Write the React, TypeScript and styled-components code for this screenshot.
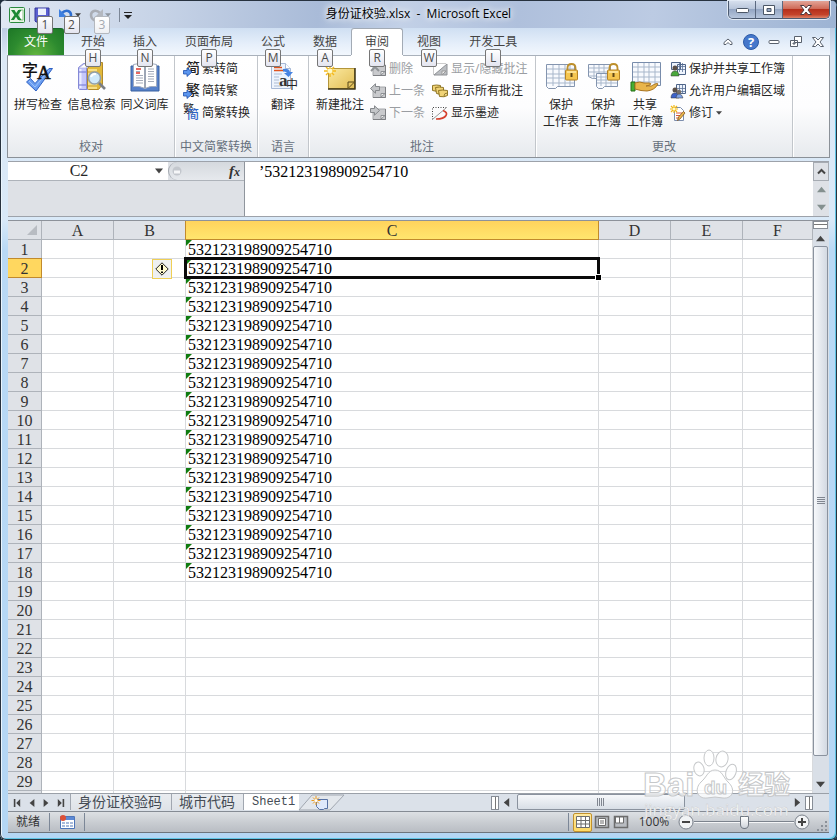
import React from "react";
import styled, { createGlobalStyle, css } from "styled-components";

const ui = `"Open Sans", "Noto Sans CJK SC", sans-serif`;
const song = `"Liberation Serif", "Noto Sans CJK SC", serif`;

const GlobalStyle = createGlobalStyle`
  * { box-sizing: border-box; }
  body { margin: 0; background: #1f2c3b; }
  button, input, textarea { font: inherit; color: inherit; margin: 0; padding: 0; border: 0; background: none; }
  svg { display: block; flex: none; overflow: visible; }
`;

const Frame = styled.div`
  position: relative;
  display: flex;
  flex-direction: column;
  height: 100vh;
  min-height: 480px;
  overflow: hidden;
  padding: 0 8px 7px 8px;
  border-radius: 7px 7px 6px 6px;
  font: 12px/16px ${ui};
  color: #262626;
  background: linear-gradient(#a9bddb 0, #bccbe2 26px, #dce8f5 56px, #d9e9f8 220px, #b9d9f5 250px, #b4d6f4 100%);
  box-shadow: inset 0 0 0 1px #27323f, inset 2px 0 0 #eaf5fd, inset -2px -2px 0 #5ec4e4;
`;

const TitleBar = styled.header`
  position: relative;
  display: flex;
  flex: none;
  height: 27px;
  justify-content: space-between;
  align-items: flex-start;
  margin: 1px -7px 0 -7px;
  padding: 0 6px 0 8px;
  background: linear-gradient(95deg, #dfe7f2 0, #c5d2e6 20%, #a9bbd8 38%, #c3d1e7 48%, #afc0dc 62%, #bccbe3 78%, #9db3d3 100%);
`;

const Title = styled.h1`
  position: absolute;
  inset: 4px 0 auto 0;
  margin: 0;
  text-align: center;
  pointer-events: none;
  white-space: pre;
  font: 12px/17px ${ui};
  color: #000;
  text-shadow: 0 0 6px #fff, 0 0 8px #fff;
`;

const QuickBar = styled.div`
  display: flex;
  align-items: center;
  height: 28px;
`;

const QuickButton = styled.button<{ $w: number }>`
  position: relative;
  display: flex;
  align-items: center;
  gap: 2px;
  width: ${(p) => p.$w}px;
  height: 16px;
`;

const Divider = styled.span<{ $gap?: number; $h?: number }>`
  width: 1px;
  height: ${(p) => p.$h ?? 14}px;
  margin: 0 ${(p) => p.$gap ?? 6}px;
  background: #7c8797;
`;

const KeyTip = styled.span<{ $dim?: boolean; $low?: boolean }>`
  position: absolute;
  z-index: 3;
  top: ${(p) => (p.$low ? 20 : 9)}px;
  left: 50%;
  transform: translateX(-50%);
  width: 16px;
  height: 18px;
  border: 1px solid ${(p) => (p.$dim ? "#b4b8be" : "#767676")};
  border-radius: 2px;
  background: linear-gradient(#fff, ${(p) => (p.$dim ? "#eef0f4" : "#e4e5f0")});
  color: ${(p) => (p.$dim ? "#a5a9b0" : "#4c4c4c")};
  font: 12px/16px ${ui};
  text-align: center;
`;

const WindowButtons = styled.div`
  display: flex;
  height: 18px;
  border: 1px solid #4c5a70;
  border-top: 0;
  border-radius: 0 0 5px 5px;
  overflow: hidden;
  box-shadow: 0 0 0 1px #e2eaf5;
`;

const WindowButton = styled.button<{ $close?: boolean }>`
  display: grid;
  place-items: center;
  width: ${(p) => (p.$close ? 46 : 27)}px;
  border-right: ${(p) => (p.$close ? "0" : "1px solid #5b6980")};
  background: ${(p) =>
    p.$close
      ? "linear-gradient(#e2a497 0, #cf6a58 45%, #b5301c 50%, #c4432a 80%, #dd8268 100%)"
      : "linear-gradient(#d6dfed 0, #b9c6db 45%, #95a7c4 50%, #b7c6dd 100%)"};
`;

const TabRow = styled.nav`
  display: flex;
  flex: none;
  height: 27px;
  margin: 0 -1px;
  padding: 0 1px;
  background: linear-gradient(#cfdff2, #e6effa 60%, #f2f7fd);
`;

const Tab = styled.button<{ $kind?: "file" | "active" }>`
  position: relative;
  flex: none;
  padding: 0 14px;
  height: 27px;
  font: 12px/26px ${ui};
  color: #444;
  border: 1px solid transparent;
  border-width: 1px 0 0;
  ${(p) =>
    p.$kind === "file" &&
    css`
      padding: 0 16px;
      margin-right: 3px;
      color: #fff;
      border-color: #17662a;
      border-radius: 3px 3px 0 0;
      background: radial-gradient(ellipse at 50% 110%, #66b83f 0, #2d8b2f 60%, #1d7726 100%);
    `}
  ${(p) =>
    p.$kind === "active" &&
    css`
      padding: 0 13px;
      border-width: 1px 1px 0;
      border-color: #a3abb5;
      border-radius: 3px 3px 0 0;
      background: #fff;
      box-shadow: 0 1px 0 #fff;
      z-index: 1;
    `}
`;

const TabTools = styled.div`
  display: flex;
  align-items: center;
  gap: 8px;
  margin-left: auto;
  padding-right: 4px;
  button { display: block; }
`;

const Ribbon = styled.section`
  display: flex;
  flex: none;
  height: 103px;
  margin: 0 -1px;
  border: 1px solid #8b9198;
  border-top-color: #a9b1bb;
  background: linear-gradient(#fff 0, #fdfdfe 50%, #e7eaee 100%);
`;

const Group = styled.section<{ $w: number }>`
  display: flex;
  flex: none;
  flex-direction: column;
  width: ${(p) => p.$w}px;
  border-right: 1px solid #c2c6cb;
  box-shadow: 1px 0 0 #fff;
`;

const GroupBody = styled.div<{ $pad?: number }>`
  display: flex;
  flex: 1;
  padding: 2px 0 0 ${(p) => p.$pad ?? 3}px;
`;

const GroupName = styled.h2`
  margin: 0 0 1px;
  text-align: center;
  white-space: nowrap;
  font: 12px/18px ${ui};
  color: #66707c;
`;

const BigButton = styled.button<{ $w: number }>`
  display: flex;
  flex-direction: column;
  align-items: center;
  width: ${(p) => p.$w}px;
  height: 74px;
  line-height: 17px;
  white-space: nowrap;
  svg { margin: 2px 0 4px; }
`;

const Stack = styled.div<{ $ml?: number }>`
  display: flex;
  flex-direction: column;
  margin-left: ${(p) => p.$ml ?? 0}px;
`;

const SmallButton = styled.button`
  display: flex;
  align-items: center;
  gap: 3px;
  height: 22px;
  white-space: nowrap;
  &:disabled { color: #9a9da2; }
`;

const FormulaBar = styled.section`
  display: flex;
  flex: none;
  height: 56px;
  margin-top: 3px;
  border: 1px solid #9da2aa;
  border-width: 1px 0;
  background: #dee1e6;
`;

const NameArea = styled.div`
  flex: none;
  width: 237px;
  border-right: 1px solid #8f959d;
`;

const NameRow = styled.div`
  display: flex;
  align-items: center;
  height: 19px;
  border-bottom: 1px solid #aeb3ba;
`;

const NameInput = styled.input`
  width: 142px;
  height: 18px;
  background: #fff !important;
  text-align: center;
  font: 16px/18px ${song} !important;
`;

const NameArrow = styled.button`
  display: grid;
  place-items: center;
  width: 18px;
  height: 18px;
  background: #fff !important;
`;

const FxZone = styled.div`
  display: flex;
  flex: 1;
  align-items: center;
  justify-content: space-between;
  height: 18px;
  padding: 0 4px 0 3px;
  border-left: 1px solid #a4a9b0;
  border-radius: 9px 0 0 9px;
  background: linear-gradient(#d5d9de, #e6e9ed);
`;

const FxButton = styled.button`
  font: italic bold 15px/16px "Liberation Serif", serif !important;
  color: #333;
  span { font-size: 12px; }
`;

const FormulaInput = styled.textarea`
  flex: 1;
  min-width: 0;
  padding: 1px 14px !important;
  resize: none;
  outline: none;
  background: #fff !important;
  font: 16px/18px ${song} !important;
  color: #000;
`;

const FormulaScroll = styled.div`
  display: flex;
  flex-direction: column;
  width: 16px;
  button { display: grid; place-items: center; flex: 1; }
  button:first-child { border: 1px solid #a6abb2; }
`;

const GridArea = styled.main`
  display: flex;
  flex: 1;
  min-height: 0;
  margin-top: 3px;
  border-top: 1px solid #8d929a;
  background: #fff;
`;

const SheetView = styled.div`
  flex: 1;
  min-width: 0;
  overflow: hidden;
`;

const Sheet = styled.table`
  width: 100%;
  min-width: 800px;
  table-layout: fixed;
  border-collapse: separate;
  border-spacing: 0;
  font: 16px/16px ${song};
  color: #000;
`;

const Col = styled.col<{ $w?: number }>`
  width: ${(p) => (p.$w ? p.$w + "px" : "auto")};
`;

const Head = styled.th<{ $on?: boolean; $row?: boolean }>`
  height: 19px;
  padding: 2px 0 0;
  border: 1px solid #aeb3ba;
  border-width: 0 1px 1px 0;
  font-weight: 400;
  color: #333;
  background: #dfe2e7;
  ${(p) =>
    p.$on &&
    css`
      background: ${p.$row ? "#ffd75f" : "linear-gradient(#ffd35c, #ffe66e)"};
      border-color: #c18a2c;
      box-shadow: ${p.$row ? "0 -1px 0 #c18a2c" : "-1px 0 0 #c18a2c"};
    `}
`;

const Corner = styled.th`
  padding: 0 4px 0 0;
  border: 1px solid #aeb3ba;
  border-width: 0 1px 1px 0;
  background: #dfe2e7;
  svg { margin-left: auto; }
`;

const Cell = styled.td<{ $text?: boolean; $sel?: boolean }>`
  position: relative;
  height: 19px;
  padding: 2px 0 0 2px;
  border: 1px solid #d8dadd;
  border-width: 0 1px 1px 0;
  ${(p) =>
    p.$text &&
    css`
      &::before {
        content: "";
        position: absolute;
        top: 0;
        left: 0;
        border: 3px solid #107c10;
        border-right-color: transparent;
        border-bottom-color: transparent;
      }
    `}
  ${(p) =>
    p.$sel &&
    css`
      &::after {
        content: "";
        position: absolute;
        z-index: 1;
        inset: -2px -2px -2px -2px;
        border: 3px solid #0b0b0b;
      }
    `}
`;

const FillHandle = styled.span`
  position: absolute;
  z-index: 2;
  right: -4px;
  bottom: -4px;
  width: 7px;
  height: 7px;
  border: 1px solid #fff;
  background: #000;
`;

const ErrorButton = styled.button`
  position: absolute;
  top: 0;
  right: 13px;
  display: grid;
  place-items: center;
  width: 20px;
  height: 20px;
  border: 1px solid #efcf55 !important;
  background: #eef0f1 !important;
`;

const VScroll = styled.div`
  display: flex;
  flex-direction: column;
  flex: none;
  width: 16px;
  padding-bottom: 1px;
  background: #d9dfe7;
`;

const ArrowButton = styled.button`
  display: grid;
  place-items: center;
  flex: none;
  width: 15px;
  height: 16px;
`;

const SplitV = styled.span`
  width: 15px;
  height: 8px;
  margin-bottom: 1px;
  border: 1px solid #878d96;
  background: linear-gradient(#fff 2px, #777 2px, #777 3px, #fff 3px);
`;

const VThumb = styled.button`
  display: grid;
  place-items: center;
  flex: 1;
  width: 15px;
  border: 1px solid #8a929e !important;
  border-radius: 2px;
  background: linear-gradient(90deg, #f6f8fb, #d3d9e2) !important;
`;

const VGap = styled.span`
  height: 20px;
`;

const SheetBar = styled.nav`
  display: flex;
  flex: none;
  align-items: stretch;
  height: 18px;
  border-top: 1px solid #9aa0a8;
  background: #dbe1e9;
`;

const SheetNav = styled.div`
  display: flex;
  flex: none;
  width: 62px;
  align-items: center;
  justify-content: space-around;
  padding: 0 2px;
`;

const SheetTab = styled.button<{ $w: number; $active?: boolean }>`
  flex: none;
  width: ${(p) => p.$w}px;
  height: 16px;
  padding-left: ${(p) => (p.$active ? 8 : 7)}px !important;
  text-align: left;
  white-space: nowrap;
  font: ${(p) => (p.$active ? `12px/16px "Liberation Mono", monospace` : `14px/14px ${ui}`)} !important;
  color: #454c55 !important;
  background: ${(p) => (p.$active ? "#fff" : "linear-gradient(#e9ecf0, #dfe3e8)")} !important;
  border-left: 1px solid #a1a7b0 !important;
`;

const SplitH = styled.span`
  width: 8px;
  height: 14px;
  margin: 0;
  align-self: center;
  border: 1px solid #878d96;
  background: linear-gradient(90deg, #fff 3px, #777 3px, #777 4px, #fff 4px);
`;

const HScroll = styled.div`
  display: flex;
  width: 322px;
  margin-left: auto;
  margin-right: 16px;
`;

const HTrack = styled.div`
  flex: 1;
  padding-left: 3px;
`;

const HThumb = styled.button`
  display: grid;
  place-items: center;
  width: 168px;
  height: 16px;
  border: 1px solid #8a929e !important;
  border-radius: 2px;
  background: linear-gradient(#f6f8fb, #d8dee6) !important;
`;

const StatusBar = styled.footer`
  display: flex;
  flex: none;
  align-items: center;
  height: 22px;
  padding: 0 1px 0 8px;
  border-top: 1px solid #858b94;
  border-bottom: 1px solid #6e747c;
  background: linear-gradient(#dde0e4, #c6cacf 60%, #b9bdc3);
  color: #333;
`;

const Spacer = styled.span`
  flex: 1;
`;

const ViewButton = styled.button<{ $on?: boolean }>`
  display: grid;
  place-items: center;
  width: 19px;
  height: 19px;
  border-radius: 2px;
  ${(p) =>
    p.$on &&
    css`
      border: 1px solid #c2912c !important;
      background: linear-gradient(#ffe9a0, #ffd964) !important;
    `}
`;

const ZoomText = styled.button`
  width: 42px;
  text-align: center;
`;

const Zoom = styled.input`
  appearance: none;
  width: 100px;
  height: 16px;
  background: linear-gradient(transparent 7px, #7c838d 7px, #7c838d 8px, #f4f5f7 8px, #f4f5f7 9px, transparent 9px) !important;
  &::-webkit-slider-thumb {
    appearance: none;
    width: 9px;
    height: 13px;
    background: linear-gradient(#fff, #cfd4db);
    border: 1px solid #6f7680;
    border-radius: 1px 1px 5px 5px;
  }
`;

const Watermark = styled.div`
  position: absolute;
  right: 44px;
  bottom: 18px;
  z-index: 5;
  width: 150px;
  pointer-events: none;
`;

/* ---------- small drawings ---------- */

const Arrow = ({ dir = "down", size = 9, fill = "#444" }: { dir?: string; size?: number; fill?: string }) => {
  const d: Record<string, string> = {
    down: "M0 2h10L5 8z",
    up: "M0 8h10L5 2z",
    left: "M8 0v10L2 5z",
    right: "M2 0v10l6-5z",
    first: "M1 0h2v10H1zM9 0v10L4 5z",
    last: "M7 0h2v10H7zM1 0v10l5-5z",
  };
  return (
    <svg width={size} height={size} viewBox="0 0 10 10">
      <path d={d[dir]} fill={fill} />
    </svg>
  );
};

const ExcelLogo = () => (
  <svg width="16" height="16" viewBox="0 0 16 16">
    <rect x=".5" y=".5" width="15" height="15" rx="1" fill="#e9f5e6" stroke="#2b8a3e" />
    <path d="M10 3h4v10h-4z" fill="#fff" stroke="#8cc48c" />
    <path d="M2 3h3.500L7.200 6l2-3h3.300L9 8l3.500 5H9L7 9.800 5 13H1.800L5.400 8z" fill="#1d8a34" />
  </svg>
);
const SaveIcon = () => (
  <svg width="16" height="16" viewBox="0 0 16 16">
    <path d="M1 1h14v14H2l-1-1z" fill="#5a5fd0" stroke="#34389b" />
    <path d="M4 1.500h8V8H4z" fill="#eef2fb" />
    <path d="M5 11h7v4H5z" fill="#dfe3ee" />
  </svg>
);
const UndoIcon = ({ redo }: { redo?: boolean }) => (
  <svg width="14" height="14" viewBox="0 0 14 14">
    <g transform={redo ? "translate(14 0) scale(-1 1)" : undefined}>
      <path d="M3 5c4-4 9-2 9 2 0 3-2 5-5 6" fill="none" stroke={redo ? "#a9adb5" : "#2f6fd0"} strokeWidth="2.600" />
      <path d="M0 1v8h8z" fill={redo ? "#b4b8bf" : "#3f80df"} />
    </g>
  </svg>
);
const Spell = () => (
  <svg width="32" height="32" viewBox="0 0 32 32">
    <path d="M4.500 22l4-3.500 4.500 5L27 8.500l3.500 0L14 31z" fill="#6a9df0" stroke="#2f62c4" />
    <path d="M7 21l6 6L27 10" fill="none" stroke="#9cc2fb" />
    <text x="0" y="16" fontSize="16" fontFamily="Noto Sans CJK SC" fontWeight="500" fill="#111">字</text>
    <text x="15" y="19" fontSize="19" fontFamily="Liberation Serif" fill="#111" stroke="#111" strokeWidth=".5">A</text>
  </svg>
);
const Research = () => (
  <svg width="32" height="32" viewBox="0 0 32 32">
    <path d="M2.500 7.500l5-4h6v24l-2 2h-8l-1-1z" fill="#c6c8fb" stroke="#8489d6" />
    <path d="M3 8l5-4h5l-3 4z" fill="#fff" stroke="#a3a6dc" strokeWidth=".6" />
    <path d="M4.500 9v19" stroke="#eceeff" strokeWidth="2" />
    <path d="M3 12h7M3 25h7" stroke="#6f74d0" />
    <path d="M10.500 8v21" stroke="#8a8fdb" />
    <path d="M11.500 8.500l5-6h10v22l-4 5h-10l-1-1z" fill="#e2b93a" stroke="#b1892a" />
    <path d="M12 9h9v20h-9z" fill="#f8df84" />
    <path d="M12 12h9M12 26h9" stroke="#c99c25" />
    <circle cx="18.500" cy="18" r="6" fill="#cfe9fb" stroke="#93a0ab" strokeWidth="1.600" />
    <path d="M15 17q1-3.500 5-3" stroke="#fff" fill="none" strokeWidth="2" />
    <path d="M23 23l6 6" stroke="#7b7f86" strokeWidth="2.600" />
  </svg>
);
const Thesaurus = () => (
  <svg width="32" height="32" viewBox="0 0 32 32">
    <path d="M2 6h28v25H2z" fill="#5681cb" stroke="#38609f" />
    <path d="M4.500 4.500q6-2 11.500 0 6-2 11.500 0v22q-6-1-11.500 2-6-3-11.500-2z" fill="#fff" stroke="#9fabc0" />
    <path d="M16 5v23" stroke="#7d899c" strokeWidth="1.500" />
    <path d="M7 9h5M7 13h4" stroke="#e0392e" strokeWidth="1.500" />
    <path d="M7 11.500h4M7 15.500h7M7 18h7M7 20.500h7M7 23h7M19 9h6M19 11.500h6M19 14h6M19 16.500h6M19 19h6M19 21.500h6" stroke="#a3abba" />
  </svg>
);
const Convert = ({ a, mode }: { a: string; mode?: string }) => (
  <svg width="16" height="16" viewBox="0 0 16 16">
    <text x={mode ? 0 : 3} y={mode ? 8 : 12} fontSize={mode ? 11 : 14} fontWeight={mode ? 400 : 500} fontFamily="Noto Sans CJK SC" fill="#222">{a}</text>
    {mode ? (
      <text x="4" y="14" fontSize="12" fontWeight="500" fontFamily="Noto Sans CJK SC" fill="#2d64c7">{mode}</text>
    ) : (
      <path d="M.5 9.500h3.500V7L9 11l-5 4.500V13H.5z" fill="#5b95ee" stroke="#1d4fae" strokeWidth=".8" />
    )}
  </svg>
);
const Translate = () => (
  <svg width="32" height="32" viewBox="0 0 32 32">
    <path d="M4.500 3.500h14l5 5v20h-19z" fill="#eef4fd" stroke="#a7b9d6" />
    <path d="M18.500 3.500v5h5" fill="#fff" stroke="#a7b9d6" />
    <path d="M7 7.500h8M7 10.500h10" stroke="#e0541f" strokeWidth="1.600" />
    <path d="M7 14h8M7 17h5M7 20h5M7 23h5M7 26h8" stroke="#aebdd4" />
    <path d="M16 9q6-1 7 3h3l-4.500 5-4.500-4h3q-1-2-4-1.500z" fill="#4784e2" />
    <text x="12" y="26" fontSize="17" fontWeight="700" fontFamily="Liberation Serif" fill="#333">a</text>
    <text x="19" y="29" fontSize="12" fontFamily="Noto Sans CJK SC" fill="#222">中</text>
  </svg>
);
const NewNote = () => (
  <svg width="32" height="32" viewBox="0 0 32 32">
    <defs>
      <linearGradient id="note" x1="0" y1="0" x2="1" y2="1">
        <stop offset="0" stopColor="#fbe9a0" />
        <stop offset="1" stopColor="#e2be55" />
      </linearGradient>
    </defs>
    <path d="M4.500 8.500h26v20h-26z" fill="url(#note)" stroke="#b3953a" />
    <path d="M31 8v21.500M4 29h27.500" stroke="#3d3416" strokeWidth="1.500" />
    <path d="M24 28.500V22h6.500z" fill="#e7c763" stroke="#59491a" />
    <path d="M6 5v12M0 11h12M2 7l8 8M10 7l-8 8" stroke="#f5b91a" strokeWidth="1.400" />
    <circle cx="6" cy="11" r="2.400" fill="#fffac8" />
  </svg>
);
const NoteIcon = ({ kind }: { kind: string }) => (
  <svg width="16" height="16" viewBox="0 0 16 16">
    <path d="M3 4h12.500v10.500H3z" fill="#c9cacd" stroke="#a6a8ac" />
    <path d="M15.500 4v10.500H3" fill="none" stroke="#7e8084" />
    <path d="M11 14v-3.500h4z" fill="#efefef" stroke="#8e9195" />
    {kind === "x" && <path d="M1 2l8 8M9 2l-8 8" stroke="#909397" strokeWidth="2" />}
    {kind === "l" && <path d="M9.500 3.500H5.500V.8L.5 5.500l5 4.700V7.500h4z" fill="#c4c6c9" stroke="#85888c" />}
    {kind === "r" && <path d="M.5 3.500h4V.8l5 4.700-5 4.700V7.500h-4z" fill="#c4c6c9" stroke="#85888c" />}
  </svg>
);
const ToggleNote = () => (
  <svg width="16" height="16" viewBox="0 0 16 16">
    <path d="M1.500 13.500v-11h12" fill="none" stroke="#999" strokeDasharray="1 1" />
    <path d="M15 3v11H2z" fill="#bbbec2" stroke="#8e9195" />
    <path d="M10 14v-4h4z" fill="#f0f0f0" stroke="#999" />
  </svg>
);
const AllNotes = () => (
  <svg width="16" height="16" viewBox="0 0 16 16" fill="#f0d377" stroke="#856b1a" strokeWidth=".9">
    <path d="M.5 2.500q4-1 8 0v5q-2 2-8 0z" />
    <path d="M3.500 4.500q4-1 8 0v6q-2 2-7 0z" />
    <path d="M6.500 7.500q4-1 9 0v5q-3 2-8 1z" />
    <path d="M12 13q0-3 3.500-3" fill="#fff4c0" />
  </svg>
);
const Ink = () => (
  <svg width="16" height="16" viewBox="0 0 16 16" fill="none">
    <path d="M.5 14.500v-12h15" stroke="#444" strokeDasharray="1 1.500" />
    <path d="M1 14L14 3" stroke="#999" />
    <path d="M11 5.500q5 2 3 5-2 3.500-10 3.500" stroke="#d5402d" strokeWidth="1.700" />
  </svg>
);
const Lock = () => (
  <>
    <path d="M22.500 11V8q0-4 4-4t4 4v3" fill="none" stroke="#bd8f2b" strokeWidth="1.800" />
    <rect x="20.500" y="10" width="12" height="10" rx="1" fill="#f5c650" stroke="#b58224" />
    <path d="M22 12h9" stroke="#ffeaa6" strokeWidth="1.500" />
    <path d="M25.500 13h2v4h-2z" fill="#5f4717" />
  </>
);
const Book = ({ kind }: { kind: string }) => (
  <svg width="32" height="32" viewBox="0 0 32 32">
    {kind === "sheet" && (
      <>
        <path d="M1.500 4.500h28v22h-17l-2 2h-7l-2-2z" fill="#f8fafe" stroke="#8495af" />
        <path d="M2 9h27M2 14h27M2 18h27M2 23h27M8 5v21M14 5v21M20 5v21M25 5v21" stroke="#a8b7cb" />
        <Lock />
      </>
    )}
    {kind === "book" && (
      <>
        <path d="M1.500 4.500h22v14h-18l-4-2z" fill="#f8fafe" stroke="#8495af" />
        <path d="M2 8h21M2 12h21M2 16h21M7 5v14M12 5v14M17 5v14" stroke="#a8b7cb" />
        <path d="M9.500 13.500h21v13h-13l-2 2h-4l-2-2z" fill="#f8fafe" stroke="#8495af" />
        <path d="M10 17h20M10 20h20M10 23h20M14 14v12M19 14v12M24 14v12" stroke="#a8b7cb" />
        <Lock />
      </>
    )}
    {kind === "share" && (
      <>
        <path d="M3.500 2.500h28v23h-6l-2 2h-20z" fill="#f8fafe" stroke="#788cab" />
        <path d="M4 7h27M4 12h27M4 17h27M4 22h27M9 3v23M15 3v23M20 3v23M26 3v23" stroke="#a8b7cb" />
        <path d="M2 22h4v9H2z" fill="#46ae31" stroke="#247016" />
        <path d="M6 23q5-2 9 0h5q3 0 1 2l-4 1q6 1 9-2 3-1 3 0-3 6-11 7-6 0-12-2z" fill="#e9b54a" stroke="#a87420" />
      </>
    )}
  </svg>
);
const PeopleGrid = ({ two }: { two?: boolean }) => (
  <svg width="16" height="16" viewBox="0 0 16 16">
    <path d={two ? "M6.500 1.500h9v9h-9z" : "M1.500 1.500h9v7h-9zM7.500 3.500h8v10h-8z"} fill="#eef4fd" stroke="#4e6488" />
    <path d="M7 5.500h8M7 8.500h8M9.500 2v9M12.500 2v9" stroke="#5b7195" strokeWidth=".8" />
    <circle cx="5" cy="7" r="2.500" fill="#5b5048" />
    <path d="M1 15q0-5 4-5t4 5z" fill={two ? "#3d62c9" : "#4aa83d"} stroke="#333" strokeWidth=".5" />
    {two && <circle cx="9" cy="9" r="2.300" fill="#77706a" />}
    {two && <path d="M6 15q0-4 3-4t4 4z" fill="#7fa3e8" stroke="#333" strokeWidth=".5" />}
  </svg>
);
const Track = () => (
  <svg width="16" height="16" viewBox="0 0 16 16">
    <path d="M4.500 2.500h6l3 3v10h-9z" fill="#fff" stroke="#7d8eae" />
    <path d="M6 8h6M6 10.500h5M6 13h4" stroke="#d9593c" />
    <path d="M15 8l-5 6-2.500 1.500L8.500 12l5-5.500z" fill="#edb94e" stroke="#83561b" strokeWidth=".8" />
    <path d="M4 0v8M0 4h8M1 1l6 6M7 1L1 7" stroke="#f2b713" strokeWidth="1.200" />
    <circle cx="4" cy="4" r="1.500" fill="#fffac8" />
  </svg>
);
const Warning = () => (
  <svg width="14" height="14" viewBox="0 0 14 14">
    <path d="M7 .8L13.200 7 7 13.200.8 7z" fill="#fffbd0" stroke="#222" />
    <path d="M6 3h2v5H6zM6 9.500h2v1.500H6z" fill="#000" />
  </svg>
);
const NewSheet = () => (
  <svg width="46" height="16" viewBox="0 0 46 16">
    <path d="M0 15L13 0h32L31 15z" fill="#e3e7ec" stroke="#a1a7b0" />
    <path d="M17.500 4.500h11v9h-3l-1 1h-4l-3-3z" fill="#dfe9fb" stroke="#5772a5" />
    <path d="M17 1v9M12.500 5.500h9M14 2.500l6 6M20 2.500l-6 6" stroke="#eb9a1c" />
    <circle cx="17" cy="5.500" r="1.600" fill="#fff" />
  </svg>
);
const Macro = () => (
  <svg width="16" height="16" viewBox="0 0 16 16">
    <path d="M1.500 2.500h14v12h-14z" fill="#fff" stroke="#4d75b9" />
    <path d="M2 3h13v3H2z" fill="#5c88d4" />
    <path d="M3 9h3M7 9h3M11 9h3M3 12h3M7 12h3M11 12h3" stroke="#8ca5cf" strokeWidth="1.500" />
    <circle cx="4" cy="4" r="3" fill="#dc5037" />
  </svg>
);
const ZoomButton = ({ plus }: { plus?: boolean }) => (
  <svg width="16" height="16" viewBox="0 0 16 16">
    <circle cx="8" cy="8" r="7" fill="#f1f3f5" stroke="#7a818b" />
    <path d={plus ? "M4 8h8M8 4v8" : "M4 8h8"} stroke="#444" strokeWidth="2" />
  </svg>
);
const ViewIcon = ({ kind }: { kind: number }) => (
  <svg width="14" height="12" viewBox="0 0 14 12" fill="#fff" stroke="#6d6d6d">
    {kind === 0 && <path d="M.5.5h13v11H.5zM.5 4.500h13M.5 8h13M5 .5v11M9.500.5v11" />}
    {kind === 1 && <path d="M.5.5h13v11H.5z" fill="#b9bcc1" strokeWidth="1.500" />}
    {kind === 1 && <path d="M3.500 2.500h7v7h-7zM5 5h4M5 7h4" />}
    {kind === 2 && <path d="M.5.5h13v11H.5z" fill="#b9bcc1" strokeWidth="1.500" />}
    {kind === 2 && <path d="M1.500 1h4v6h-4zM5.500 1h4v6h-4z" />}
  </svg>
);
const MiniWindow = ({ kind }: { kind: string }) => (
  <svg width="14" height="14" viewBox="0 0 14 14" fill="#fff" stroke="#59616d">
    {kind === "up" && <path d="M3 9.500v-2L7 4l4 3.500v2H9L7 7.500 5 9.500z" />}
    {kind === "min" && <rect x="2" y="5.500" width="10" height="3" rx="1" />}
    {kind === "restore" && <path d="M5.500 1.500h7v6h-7zM1.500 5.500h7v6h-7zM4 8h2v1H4z" />}
    {kind === "close" && <path d="M1.500 2.500h3L7 5l2.500-2.500h3L9 7l3.500 4.500h-3L7 9l-2.500 2.500h-3L5 7z" />}
  </svg>
);

/* ---------- data ---------- */

const tabs: [string, string?, ("file" | "active")?][] = [
  ["文件", undefined, "file"],
  ["开始", "H"],
  ["插入", "N"],
  ["页面布局", "P"],
  ["公式", "M"],
  ["数据", "A"],
  ["审阅", "R", "active"],
  ["视图", "W"],
  ["开发工具", "L"],
];

const columns = ["A", "B", "C", "D", "E", "F"];
const rows = Array.from({ length: 30 }, (_, i) => i + 1);
const ID = "532123198909254710";

const Small = ({ icon, off, children }: { icon: React.ReactNode; off?: boolean; children: React.ReactNode }) => (
  <SmallButton disabled={off}>
    {icon}
    {children}
  </SmallButton>
);

export default function App() {
  return (
    <Frame>
      <GlobalStyle />
      <TitleBar>
        <QuickBar>
          <ExcelLogo />
          <Divider $gap={4} />
          <QuickButton $w={22} aria-label="保存">
            <SaveIcon />
            <KeyTip>1</KeyTip>
          </QuickButton>
          <Divider $gap={1} $h={0} />
          <QuickButton $w={25} aria-label="撤消">
            <UndoIcon />
            <Arrow size={6} />
            <KeyTip>2</KeyTip>
          </QuickButton>
          <Divider $gap={2} $h={0} />
          <QuickButton $w={26} disabled aria-label="恢复">
            <UndoIcon redo />
            <Arrow size={6} fill="#8f969f" />
            <KeyTip $dim>3</KeyTip>
          </QuickButton>
          <Divider $gap={4} />
          <button aria-label="自定义快速访问工具栏">
            <svg width="8" height="8" viewBox="0 0 8 8">
              <path d="M0 1h8v1H0zM0 4h8L4 8z" fill="#222" />
            </svg>
          </button>
        </QuickBar>
        <Title>身份证校验.xlsx  -  Microsoft Excel</Title>
        <WindowButtons>
          <WindowButton aria-label="最小化">
            <svg width="13" height="6"><rect x=".5" y="1.500" width="12" height="4" rx="1" fill="#fff" stroke="#4b5666" /></svg>
          </WindowButton>
          <WindowButton aria-label="还原">
            <svg width="12" height="10"><path d="M.5.5h11v9H.5zM4 3.500h4v3H4z" fill="#fff" stroke="#4b5666" fillRule="evenodd" /></svg>
          </WindowButton>
          <WindowButton $close aria-label="关闭">
            <svg width="12" height="10"><path d="M.5.5h3.500L6 3l2-2.500h3.500L8 5l3.500 4.500H8L6 7 4 9.500H.5L4 5z" fill="#fff" stroke="#4d3a40" /></svg>
          </WindowButton>
        </WindowButtons>
      </TitleBar>

      <TabRow>
        {tabs.map(([name, key, kind]) => (
          <Tab key={name} $kind={kind}>
            {name}
            {key && <KeyTip $low>{key}</KeyTip>}
          </Tab>
        ))}
        <TabTools>
          <button aria-label="功能区最小化"><MiniWindow kind="up" /></button>
          <button aria-label="帮助">
            <svg width="16" height="16" viewBox="0 0 16 16">
              <circle cx="8" cy="8" r="7.500" fill="#4577cb" stroke="#2c5aa6" />
              <text x="8" y="13" textAnchor="middle" fontSize="13" fontWeight="700" fontFamily="Open Sans" fill="#fff">?</text>
            </svg>
          </button>
          <button aria-label="最小化窗口"><MiniWindow kind="min" /></button>
          <button aria-label="还原窗口"><MiniWindow kind="restore" /></button>
          <button aria-label="关闭窗口"><MiniWindow kind="close" /></button>
        </TabTools>
      </TabRow>

      <Ribbon>
        <Group $w={167}>
          <GroupBody>
            <BigButton $w={54}><Spell />拼写检查</BigButton>
            <BigButton $w={53}><Research />信息检索</BigButton>
            <BigButton $w={53}><Thesaurus />同义词库</BigButton>
          </GroupBody>
          <GroupName>校对</GroupName>
        </Group>
        <Group $w={83}>
          <GroupBody $pad={8}>
            <Stack>
              <Small icon={<Convert a="简" />}>繁转简</Small>
              <Small icon={<Convert a="繁" />}>简转繁</Small>
              <Small icon={<Convert a="繁" mode="简" />}>简繁转换</Small>
            </Stack>
          </GroupBody>
          <GroupName>中文简繁转换</GroupName>
        </Group>
        <Group $w={51}>
          <GroupBody $pad={4}>
            <BigButton $w={42}><Translate />翻译</BigButton>
          </GroupBody>
          <GroupName>语言</GroupName>
        </Group>
        <Group $w={227}>
          <GroupBody $pad={4}>
            <BigButton $w={54}><NewNote />新建批注</BigButton>
            <Stack $ml={3}>
              <Small off icon={<NoteIcon kind="x" />}>删除</Small>
              <Small off icon={<NoteIcon kind="l" />}>上一条</Small>
              <Small off icon={<NoteIcon kind="r" />}>下一条</Small>
            </Stack>
            <Stack $ml={7}>
              <Small off icon={<ToggleNote />}>显示/隐藏批注</Small>
              <Small icon={<AllNotes />}>显示所有批注</Small>
              <Small icon={<Ink />}>显示墨迹</Small>
            </Stack>
          </GroupBody>
          <GroupName>批注</GroupName>
        </Group>
        <Group $w={257}>
          <GroupBody $pad={4}>
            <BigButton $w={42}><Book kind="sheet" />保护<br />工作表</BigButton>
            <BigButton $w={42}><Book kind="book" />保护<br />工作簿</BigButton>
            <BigButton $w={42}><Book kind="share" />共享<br />工作簿</BigButton>
            <Stack $ml={4}>
              <Small icon={<PeopleGrid />}>保护并共享工作簿</Small>
              <Small icon={<PeopleGrid two />}>允许用户编辑区域</Small>
              <Small icon={<Track />}>修订 <Arrow size={6} /></Small>
            </Stack>
          </GroupBody>
          <GroupName>更改</GroupName>
        </Group>
      </Ribbon>

      <FormulaBar>
        <NameArea>
          <NameRow>
            <NameInput aria-label="名称框" defaultValue="C2" />
            <NameArrow aria-label="名称列表"><Arrow size={8} /></NameArrow>
            <FxZone>
              <svg width="10" height="10"><circle cx="5" cy="5" r="4.500" fill="#c3c7cd" /><path d="M2 6h6" stroke="#f5f6f8" strokeWidth="3" /></svg>
              <FxButton aria-label="插入函数">f<span>x</span></FxButton>
            </FxZone>
          </NameRow>
        </NameArea>
        <FormulaInput aria-label="编辑栏" defaultValue={"’" + ID} />
        <FormulaScroll>
          <button aria-label="折叠编辑栏"><svg width="9" height="7"><path d="M1 5.500l3.500-3.500L8 5.500" fill="none" stroke="#444" strokeWidth="2" /></svg></button>
          <button aria-label="向上"><Arrow dir="up" fill="#84908f" /></button>
          <button aria-label="向下"><Arrow fill="#84908f" /></button>
        </FormulaScroll>
      </FormulaBar>

      <GridArea>
        <SheetView>
          <Sheet>
            <colgroup>
              <Col $w={34} />
              <Col $w={72} />
              <Col $w={72} />
              <Col $w={413} />
              <Col $w={72} />
              <Col $w={72} />
              <Col />
            </colgroup>
            <thead>
              <tr>
                <Corner aria-label="全选"><svg width="10" height="10"><path d="M10 0v10H0z" fill="#b8bcc2" /></svg></Corner>
                {columns.map((c) => <Head key={c} scope="col" $on={c === "C"}>{c}</Head>)}
              </tr>
            </thead>
            <tbody>
              {rows.map((r) => (
                <tr key={r}>
                  <Head scope="row" $row $on={r === 2}>{r}</Head>
                  {columns.map((c) => (
                    <Cell key={c} $text={c === "C" && r <= 18} $sel={c === "C" && r === 2}>
                      {c === "C" && r <= 18 && ID}
                      {c === "C" && r === 2 && <FillHandle />}
                      {c === "B" && r === 2 && <ErrorButton aria-label="错误检查"><Warning /></ErrorButton>}
                    </Cell>
                  ))}
                </tr>
              ))}
            </tbody>
          </Sheet>
        </SheetView>
        <VScroll>
          <SplitV />
          <ArrowButton aria-label="向上滚动"><Arrow dir="up" /></ArrowButton>
          <VThumb aria-label="垂直滚动条"><svg width="8" height="8"><path d="M0 .5h8M0 2.500h8M0 4.500h8M0 6.500h8" stroke="#808690" /></svg></VThumb>
          <VGap />
          <ArrowButton aria-label="向下滚动"><Arrow /></ArrowButton>
        </VScroll>
      </GridArea>

      <SheetBar>
        <SheetNav>
          {["first", "left", "right", "last"].map((d) => (
            <button key={d} aria-label={d}><Arrow dir={d} size={8} /></button>
          ))}
        </SheetNav>
        <SheetTab $w={101}>身份证校验码</SheetTab>
        <SheetTab $w={72}>城市代码</SheetTab>
        <SheetTab $w={56} $active>Sheet1</SheetTab>
        <button aria-label="插入工作表"><NewSheet /></button>
        <HScroll>
          <SplitH />
          <ArrowButton aria-label="向左滚动"><Arrow dir="left" /></ArrowButton>
          <HTrack>
            <HThumb aria-label="水平滚动条"><svg width="8" height="8"><path d="M.5 0v8M2.500 0v8M4.500 0v8M6.500 0v8" stroke="#808690" /></svg></HThumb>
          </HTrack>
          <ArrowButton aria-label="向右滚动"><Arrow dir="right" /></ArrowButton>
          <SplitH />
        </HScroll>
      </SheetBar>

      <StatusBar>
        就绪
        <Divider $gap={9} $h={18} />
        <button aria-label="录制宏"><Macro /></button>
        <Divider $gap={9} $h={18} />
        <Spacer />
        <Divider $gap={4} $h={18} />
        <ViewButton $on aria-label="普通"><ViewIcon kind={0} /></ViewButton>
        <ViewButton aria-label="页面布局"><ViewIcon kind={1} /></ViewButton>
        <ViewButton aria-label="分页预览"><ViewIcon kind={2} /></ViewButton>
        <Divider $gap={1} $h={0} />
        <ZoomText>100%</ZoomText>
        <Divider $gap={1} $h={0} />
        <button aria-label="缩小"><ZoomButton /></button>
        <Zoom type="range" min={0} max={100} defaultValue={50} aria-label="显示比例" />
        <button aria-label="放大"><ZoomButton plus /></button>
        <Divider $gap={3} $h={0} />
        <svg width="11" height="20"><path d="M8 9h2v2H8zM8 13h2v2H8zM8 17h2v2H8zM4 13h2v2H4zM4 17h2v2H4zM0 17h2v2H0z" fill="#8b9199" /></svg>
      </StatusBar>

      <Watermark>
        <svg width="150" height="74" viewBox="0 0 150 74" fill="#fff" fillOpacity=".75" stroke="#c6c8ca">
          <ellipse cx="56" cy="21" rx="5" ry="7" transform="rotate(-15 56 21)" />
          <ellipse cx="66" cy="10" rx="5" ry="8" />
          <ellipse cx="79" cy="11" rx="6" ry="8" transform="rotate(12 79 11)" />
          <ellipse cx="88" cy="24" rx="5" ry="8" transform="rotate(20 88 24)" />
          <path d="M72 22c7 0 8 7 13 12 8 7 5 17-5 16q-8-2-16 0c-10 1-13-9-6-16 6-5 7-12 14-12z" />
          <g fontFamily="Liberation Sans" fontWeight="700">
            <text x="0" y="48" fontSize="33">Bai</text>
            <text x="61" y="46" fontSize="19">du</text>
            <text x="95" y="46" fontSize="26" fontFamily="Noto Sans CJK SC">经验</text>
          </g>
          <text x="1" y="68" fontSize="17" fillOpacity=".95" strokeWidth=".4" fontFamily="Open Sans">jingyan.baidu.com</text>
        </svg>
      </Watermark>
    </Frame>
  );
}
